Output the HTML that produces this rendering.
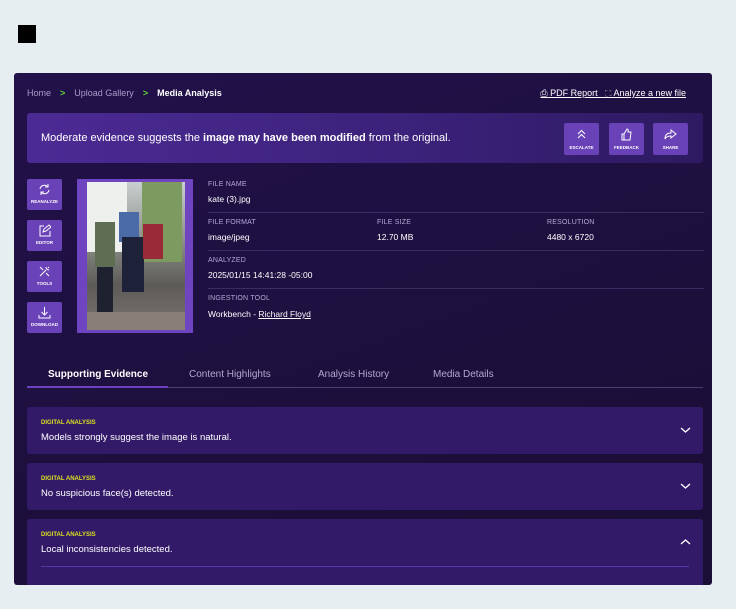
<!DOCTYPE html>
<html><head><meta charset="utf-8"><style>
*{box-sizing:border-box;margin:0;padding:0}
body{width:736px;height:609px;background:#e7eef2;font-family:"Liberation Sans",sans-serif;position:relative;overflow:hidden;color:#fff}
.sq{position:absolute;left:18px;top:25px;width:18px;height:18px;background:#000}
.panel{position:absolute;left:14px;top:73px;width:698px;height:512px;background:linear-gradient(160deg,#22114a 0%,#1c0f3c 60%,#1a0f35 100%);border-radius:3px;overflow:hidden}
.abs{position:absolute}
.bc{left:13px;top:15px;font-size:9px;color:#a89cc8}
.bc b{color:#fff}
.bc .ch{color:#5ed23a;font-weight:bold;margin:0 9px}
.links{right:26px;top:15px;font-size:9px;text-decoration:underline;color:#fff}
.banner{left:13px;top:40px;width:676px;height:50px;background:linear-gradient(90deg,#4c2a94,#3a2178 60%,#2e1a62);border-radius:3px}
.banner .t{position:absolute;left:14px;top:19px;font-size:11px}
.bb{position:absolute;top:10px;width:35px;height:32px;background:#6a42b8;border-radius:2px;text-align:center;font-size:4.5px;font-weight:bold;padding-top:22px}
.bb svg{position:absolute;left:11px;top:5px}
.lb{position:absolute;left:13px;width:35px;height:31px;background:#6a42b8;border-radius:2px;text-align:center;font-size:4.5px;font-weight:bold;padding-top:20px}
.lb svg{position:absolute;left:11px;top:4px}
.img{left:63px;top:106px;width:116px;height:154px;background:#6e44c0;padding:3px 8px 3px 10px}
.ph{width:100%;height:100%;background:linear-gradient(180deg,#c9cfd0 0%,#8b8f88 40%,#5d5a57 70%,#7a7672 100%);position:relative;overflow:hidden}
.lab{font-size:7px;color:#b5a9d6;letter-spacing:.2px}
.val{font-size:8.5px;color:#fff}
.hr{position:absolute;left:194px;width:496px;height:1px;background:#3a2c60}
.tabs{left:13px;top:296px;width:676px;height:19px;border-bottom:1px solid #4a3d70;font-size:10px;color:#b3a8cf}
.tabs span{position:absolute;top:0}
.card{position:absolute;left:13px;width:676px;background:#331a68;border-radius:3px}
.card .k{position:absolute;left:14px;top:13px;font-size:6px;font-weight:bold;color:#d6e020}
.card .m{position:absolute;left:14px;top:25px;font-size:9.5px}
.card svg{position:absolute;right:12px;top:19px}
</style></head><body>
<div class="sq"></div>
<div class="panel">
<div class="abs bc">Home<span class="ch">&gt;</span>Upload Gallery<span class="ch">&gt;</span><b>Media Analysis</b></div>
<div class="abs links"><span style="text-decoration:none">⎙</span> PDF Report &nbsp;&nbsp;<span style="text-decoration:none;color:#aaa">⛶</span> Analyze a new file</div>
<div class="abs banner"><div class="t">Moderate evidence suggests the <b>image may have been modified</b> from the original.</div>
<div class="bb" style="left:537px"><svg width="13" height="13" viewBox="0 0 13 13" fill="none" stroke="#fff" stroke-width="1"><path d="M3 6l3.5-3.5L10 6M3 10l3.5-3.5L10 10"/></svg>ESCALATE</div>
<div class="bb" style="left:582px"><svg width="13" height="13" viewBox="0 0 13 13" fill="none" stroke="#fff" stroke-width="1"><path d="M2 6h2v6H2zM4 6l3-5c1 0 1.5 1 1 3h3l-1 8H4"/></svg>FEEDBACK</div>
<div class="bb" style="left:626px"><svg width="13" height="13" viewBox="0 0 13 13" fill="none" stroke="#fff" stroke-width="1"><path d="M7 2l5 4-5 4V8C4 8 2 9 1 11c0-4 2-6 6-6z"/></svg>SHARE</div>
</div>
<div class="lb" style="top:106px"><svg width="13" height="13" viewBox="0 0 13 13" fill="none" stroke="#fff" stroke-width="1"><path d="M2 6a4.5 4.5 0 0 1 8-2M11 7a4.5 4.5 0 0 1-8 2M10 1v3H7M3 12V9h3"/></svg>REANALYZE</div>
<div class="lb" style="top:147px"><svg width="13" height="13" viewBox="0 0 13 13" fill="none" stroke="#fff" stroke-width="1"><path d="M6 2H2v10h10V7M5 8l1-3 5-4 2 2-5 4z"/></svg>EDITOR</div>
<div class="lb" style="top:188px"><svg width="13" height="13" viewBox="0 0 13 13" fill="none" stroke="#fff" stroke-width="1"><path d="M2 11l6-6M8 2a3 3 0 0 0 3 3M2 2l3 3M8 8l3 3M10 2l1 1"/></svg>TOOLS</div>
<div class="lb" style="top:229px"><svg width="13" height="13" viewBox="0 0 13 13" fill="none" stroke="#fff" stroke-width="1"><path d="M6.5 1v8M3.5 6l3 3 3-3M1 9v3h11V9"/></svg>DOWNLOAD</div>
<div class="abs img"><div class="ph">
<div class="abs" style="left:0;top:0;width:40px;height:70px;background:#eef0ee"></div>
<div class="abs" style="left:55px;top:0;width:40px;height:80px;background:#7d9a60"></div>
<div class="abs" style="left:8px;top:40px;width:20px;height:45px;background:#5f6e52"></div>
<div class="abs" style="left:10px;top:85px;width:16px;height:50px;background:#1e2130"></div>
<div class="abs" style="left:32px;top:30px;width:20px;height:30px;background:#4a6aa8"></div>
<div class="abs" style="left:35px;top:55px;width:22px;height:55px;background:#1e2238"></div>
<div class="abs" style="left:56px;top:42px;width:20px;height:35px;background:#9a2a38"></div>
<div class="abs" style="left:0;top:130px;width:100%;height:20px;background:#8a7e78"></div>
</div></div>
<div class="abs lab" style="left:194px;top:108px">FILE NAME</div>
<div class="abs val" style="left:194px;top:121px">kate (3).jpg</div>
<div class="hr" style="top:139px"></div>
<div class="abs lab" style="left:194px;top:146px">FILE FORMAT</div>
<div class="abs val" style="left:194px;top:159px">image/jpeg</div>
<div class="abs lab" style="left:363px;top:146px">FILE SIZE</div>
<div class="abs val" style="left:363px;top:159px">12.70 MB</div>
<div class="abs lab" style="left:533px;top:146px">RESOLUTION</div>
<div class="abs val" style="left:533px;top:159px">4480 x 6720</div>
<div class="hr" style="top:177px"></div>
<div class="abs lab" style="left:194px;top:184px">ANALYZED</div>
<div class="abs val" style="left:194px;top:197px">2025/01/15 14:41:28 -05:00</div>
<div class="hr" style="top:215px"></div>
<div class="abs lab" style="left:194px;top:222px">INGESTION TOOL</div>
<div class="abs val" style="left:194px;top:236px">Workbench - <u>Richard Floyd</u></div>
<div class="abs tabs"><span style="left:21px;color:#fff;font-weight:bold">Supporting Evidence</span><span style="left:162px">Content Highlights</span><span style="left:291px">Analysis History</span><span style="left:406px">Media Details</span>
<div class="abs" style="left:0;top:17px;width:141px;height:2px;background:#6a42c0"></div></div>
<div class="card" style="top:334px;height:47px"><div class="k">DIGITAL ANALYSIS</div><div class="m">Models strongly suggest the image is natural.</div><svg width="11" height="8" viewBox="0 0 11 8" fill="none" stroke="#fff" stroke-width="1.3"><path d="M1 2l4.5 4L10 2"/></svg></div>
<div class="card" style="top:390px;height:47px"><div class="k">DIGITAL ANALYSIS</div><div class="m">No suspicious face(s) detected.</div><svg width="11" height="8" viewBox="0 0 11 8" fill="none" stroke="#fff" stroke-width="1.3"><path d="M1 2l4.5 4L10 2"/></svg></div>
<div class="card" style="top:446px;height:70px"><div class="k">DIGITAL ANALYSIS</div><div class="m">Local inconsistencies detected.</div><svg width="11" height="8" viewBox="0 0 11 8" fill="none" stroke="#fff" stroke-width="1.3"><path d="M1 6l4.5-4L10 6"/></svg>
<div class="abs" style="left:14px;top:47px;width:648px;height:1px;background:#5a38a8"></div></div>
</div>
</body></html>
